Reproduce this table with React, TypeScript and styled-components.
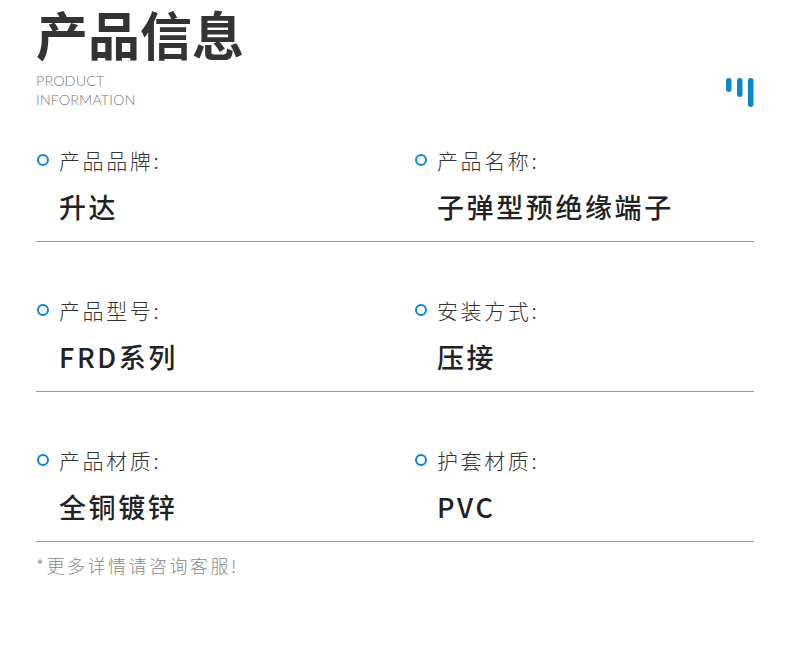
import React from "react";
import styled, { createGlobalStyle } from "styled-components";

type Field = {
  label: string;
  value: string;
};

const rows: Field[][] = [
  [
    { label: "产品品牌:", value: "升达" },
    { label: "产品名称:", value: "子弹型预绝缘端子" },
  ],
  [
    { label: "产品型号:", value: "FRD系列" },
    { label: "安装方式:", value: "压接" },
  ],
  [
    { label: "产品材质:", value: "全铜镀锌" },
    { label: "护套材质:", value: "PVC" },
  ],
];

const GlobalStyle = createGlobalStyle`
  html, body {
    margin: 0;
    padding: 0;
    background: #ffffff;
  }
  body {
    font-family: "Noto Sans CJK SC", "Noto Sans", sans-serif;
  }
`;

const Page = styled.div`
  width: 718px;
  padding: 4px 0 60px 36px;
`;

const Header = styled.header`
  display: flex;
  justify-content: space-between;
`;

const Title = styled.h1`
  margin: 0;
  font-size: 52px;
  line-height: 60px;
  font-weight: 700;
  color: #333333;
`;

const Subtitle = styled.div`
  margin-top: 7px;
  font-family: Lato, "Open Sans", sans-serif;
  font-weight: 300;
  font-size: 14.5px;
  line-height: 19px;
  color: #7a7a7a;
`;

const BarsIcon = styled.svg`
  align-self: flex-end;
  margin-bottom: 2px;
`;

const List = styled.div`
  display: flex;
  flex-direction: column;
  gap: 56px;
  margin-top: 39px;
`;

const Row = styled.div`
  display: grid;
  grid-template-columns: 378px 1fr;
  padding-bottom: 17px;
  border-bottom: 1px solid #999999;
`;

const LabelLine = styled.div`
  display: flex;
  align-items: center;
  gap: 10px;
  padding-left: 1px;
  font-size: 21px;
  line-height: 24px;
  font-weight: 300;
  letter-spacing: 2.6px;
  color: #333333;
`;

const Ring = styled.span`
  width: 12px;
  height: 12px;
  box-sizing: border-box;
  border: 2.5px solid #0b87c8;
  border-radius: 50%;
  flex-shrink: 0;
`;

const Value = styled.div`
  margin-top: 18px;
  padding-left: 23px;
  font-size: 27px;
  line-height: 34px;
  font-weight: 500;
  letter-spacing: 2.6px;
  color: #222222;
`;

const Note = styled.p`
  margin: 11px 0 0;
  font-size: 18px;
  line-height: 24px;
  font-weight: 300;
  letter-spacing: 2.5px;
  color: #888888;
`;

const App: React.FC = () => {
  return (
    <Page>
      <GlobalStyle />
      <Header>
        <div>
          <Title>产品信息</Title>
          <Subtitle>
            PRODUCT
            <br />
            INFORMATION
          </Subtitle>
        </div>
        <BarsIcon width="28" height="29" viewBox="0 0 28 29">
          <rect x="0" y="0" width="5.5" height="14" rx="2.75" fill="#0b87c8" />
          <rect x="11" y="0" width="5.5" height="19" rx="2.75" fill="#0b87c8" />
          <rect x="22" y="0" width="5.5" height="29" rx="2.75" fill="#0b87c8" />
        </BarsIcon>
      </Header>
      <List>
        {rows.map((row, i) => (
          <Row key={i}>
            {row.map((field) => (
              <div key={field.label}>
                <LabelLine>
                  <Ring />
                  {field.label}
                </LabelLine>
                <Value>{field.value}</Value>
              </div>
            ))}
          </Row>
        ))}
      </List>
      <Note>*更多详情请咨询客服!</Note>
    </Page>
  );
};

export default App;
